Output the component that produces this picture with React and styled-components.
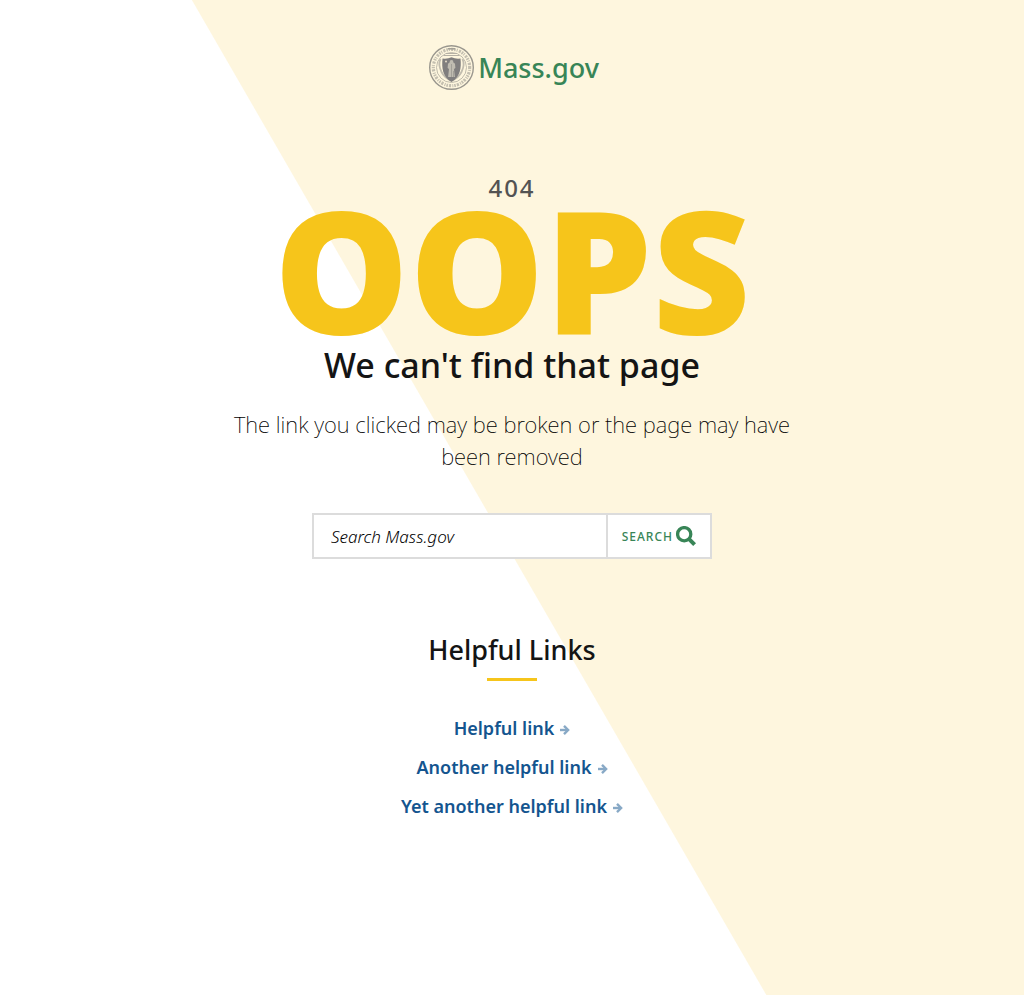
import React from "react";
import styled, { createGlobalStyle } from "styled-components";

const GlobalStyle = createGlobalStyle`
  *, *::before, *::after { box-sizing: border-box; }
  body {
    margin: 0;
    color: #141414;
    font-family: "Noto Sans", "Open Sans", sans-serif;
  }
`;

const Page = styled.main`
  min-height: 100vh;
  padding: 45px 20px 60px;
  display: flex;
  flex-direction: column;
  align-items: center;
  text-align: center;
  background: linear-gradient(60deg, #fff calc(50% - 29px), #fef6de calc(50% - 28px));
`;

const Logo = styled.a`
  display: flex;
  align-items: center;
  gap: 4px;
  height: 45px;
  margin-left: 4px;
  color: #388557;
  text-decoration: none;
`;

const LogoName = styled.span`
  font-size: 27px;
  font-weight: 500;
  line-height: 45px;
`;

const Code = styled.p`
  margin: 82px 0 0;
  color: #535353;
  font-size: 24px;
  font-weight: 500;
  line-height: 32px;
  letter-spacing: 2px;
`;

const Oops = styled.p`
  margin: 0 0 12px;
  color: #f6c51b;
  font-size: 170px;
  font-weight: 900;
  line-height: 128px;
`;

const Title = styled.h1`
  margin: 0;
  font-size: 34px;
  font-weight: 500;
  line-height: 42px;
`;

const Message = styled.p`
  max-width: 600px;
  margin: 22px 0 0;
  color: #000;
  font-size: 22px;
  font-weight: 200;
  line-height: 32px;
`;

const SearchForm = styled.form`
  display: flex;
  width: 100%;
  max-width: 400px;
  height: 46px;
  margin-top: 41px;
  background: #fff;
  border: 2px solid #dcdcdc;
`;

const SearchInput = styled.input`
  flex: 1;
  min-width: 0;
  padding: 0 17px;
  border: 0;
  background: transparent;
  color: #000;
  font: italic 300 17px "Noto Sans", sans-serif;

  &::placeholder { color: #000; opacity: 1; }
`;

const SearchButton = styled.button`
  display: flex;
  align-items: center;
  gap: 3px;
  padding: 0 14px;
  border: 0;
  border-left: 2px solid #dcdcdc;
  background: #fff;
  color: #388557;
  font: 500 12px "Noto Sans", sans-serif;
  letter-spacing: 1px;
  text-transform: uppercase;
  cursor: pointer;
`;

const Links = styled.section`
  display: flex;
  flex-direction: column;
  align-items: center;
  margin-top: 71px;
`;

const LinksTitle = styled.h2`
  margin: 0;
  font-size: 27px;
  font-weight: 500;
  line-height: 40px;

  &::after {
    content: "";
    display: block;
    width: 50px;
    height: 3px;
    margin: 8px auto 0;
    background: #f6c51b;
  }
`;

const LinkList = styled.ul`
  display: flex;
  flex-direction: column;
  align-items: center;
  gap: 13px;
  margin: 34px 0 0;
  padding: 0;
  list-style: none;
`;

const HelpfulLink = styled.a`
  display: flex;
  align-items: center;
  gap: 6px;
  color: #14558f;
  font-size: 18px;
  font-weight: 600;
  line-height: 26px;
  text-decoration: none;

  svg { margin-top: 3px; opacity: 0.5; }
`;

const LINKS = ["Helpful link", "Another helpful link", "Yet another helpful link"];

function Seal() {
  return (
    <svg width="45" height="45" viewBox="0 0 45 45" fill="none" aria-hidden="true">
      <circle cx="22.5" cy="22.5" r="21.8" stroke="#9a978e" strokeWidth="1.4" />
      <circle cx="22.5" cy="22.5" r="18.2" stroke="#c4bfb0" strokeWidth="3.2" strokeDasharray="1.6 .9 1 1.3 2.200 1" />
      <circle cx="22.5" cy="22.5" r="15" stroke="#b0aca0" strokeWidth=".8" />
      <path d="M14.500 10.500h16M17 8.500h11" stroke="#b5b0a4" strokeWidth="1.2" />
      <path d="M19 3.800h7" stroke="#a5a197" strokeWidth="1.600" />
      <path d="M11.500 14c-2 4-1 9 1 13 2 4 6 7 10 8.500 4-1.500 8-4.500 10-8.500s3-9 1-13" stroke="#c2bdaf" strokeWidth="1.800" />
      <path d="M13.500 13.500q5 .6 9-1.200 4 1.800 9 1.200c1 9.500-.2 18.500-9 23.500-8.800-5-10-14-9-23.500z" fill="#807e7e" />
      <path d="M22.500 15c1.300 0 2 .9 1.700 2.200l1.800 1.600.4 4.200-1.400 1 .9 8h-6.800l.9-8-1.400-1 .4-4.200 1.800-1.600c-.3-1.300.4-2.200 1.700-2.200z" fill="#c0bcb1" />
      <path d="M22.500 19v13M24.500 26v6" stroke="#96938e" strokeWidth=".7" />
      <circle cx="17" cy="16.500" r=".9" fill="#eee6d1" />
    </svg>
  );
}

function SearchIcon() {
  return (
    <svg width="20" height="20" viewBox="0 0 20 20" fill="none" stroke="currentColor" aria-hidden="true">
      <circle cx="8.200" cy="8.200" r="6.600" strokeWidth="3.300" />
      <path d="M12.600 12.600l6 6" strokeWidth="4" />
    </svg>
  );
}

function ArrowIcon() {
  return (
    <svg width="10" height="10" viewBox="0 0 10 10" fill="none" stroke="currentColor" aria-hidden="true">
      <path d="M0 5h7.500" strokeWidth="2.400" />
      <path d="M4 .9L8.100 5 4 9.100" strokeWidth="2.400" />
    </svg>
  );
}

export default function App() {
  return (
    <>
      <GlobalStyle />
      <Page>
        <Logo href="#">
          <Seal />
          <LogoName>Mass.gov</LogoName>
        </Logo>
        <Code>404</Code>
        <Oops>OOPS</Oops>
        <Title>We can't find that page</Title>
        <Message>The link you clicked may be broken or the page may have been removed</Message>
        <SearchForm role="search" onSubmit={(event) => event.preventDefault()}>
          <SearchInput type="search" aria-label="Search Mass.gov" placeholder="Search Mass.gov" />
          <SearchButton type="submit">
            Search
            <SearchIcon />
          </SearchButton>
        </SearchForm>
        <Links>
          <LinksTitle>Helpful Links</LinksTitle>
          <LinkList>
            {LINKS.map((label) => (
              <li key={label}>
                <HelpfulLink href="#">
                  {label}
                  <ArrowIcon />
                </HelpfulLink>
              </li>
            ))}
          </LinkList>
        </Links>
      </Page>
    </>
  );
}
